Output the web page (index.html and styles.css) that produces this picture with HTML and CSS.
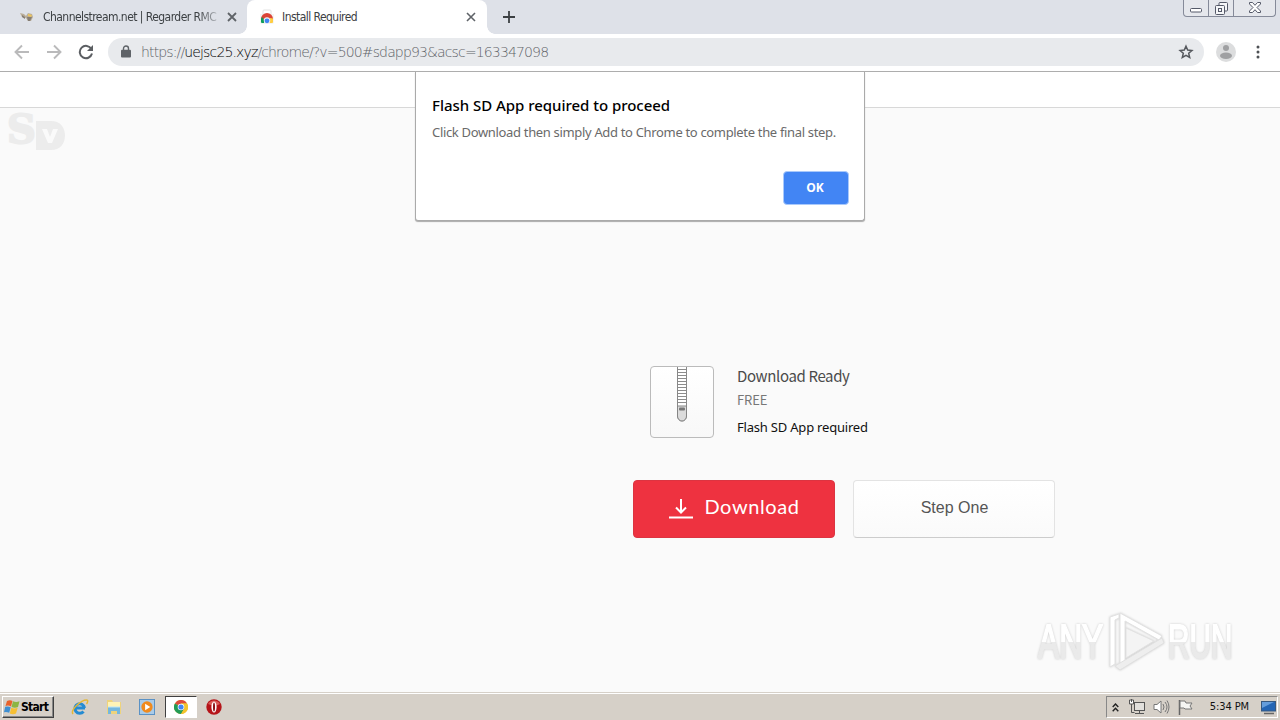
FILE: index.html
```html
<!DOCTYPE html>
<html lang="en">
<head>
    <meta charset="UTF-8">
    <meta name="viewport" content="width=device-width, initial-scale=1.0">
    <title>Install Required</title>
    <link rel="stylesheet" href="styles.css">
</head>
<body>
    <div class="screen">
        <div class="tabstrip">
            <div class="tab">
                <svg class="favicon" width="16" height="16" viewBox="0 0 16 16">
                    <path d="M1 4l4 1 2 2 2-3 4 1 1 3-2 4H9L7 9 3 8z" fill="#b9ad98"/>
                    <path d="M9 5l4 1-1 2-3-1z" fill="#ecc45c"/>
                    <path d="M8 8h5l-2 4H9zM3 6l3 2v2L3 8z" fill="#857d74"/>
                </svg>
                <span class="tab-title faded">Channelstream.net | Regarder RMC</span>
                <svg class="tab-close" width="10" height="10" viewBox="0 0 10 10"><path d="M1 1l8 8M9 1L1 9" stroke="#5f6368" stroke-width="1.8"/></svg>
            </div>
            <div class="tab active">
                <svg class="favicon" width="16" height="16" viewBox="0 0 16 16">
                    <path d="M4 5V2q0-1 1-1h6q1 0 1 1v3" fill="none" stroke="#e2e2e2"/>
                    <path d="M1 5h14v8q0 2-2 2H3q-2 0-2-2z" fill="#f4f4f4"/>
                    <path d="M2 10a6 6 0 0 1 12 0z" fill="#db4437"/>
                    <path d="M2 9.500V13q0 1 1 1h2l1-2-3-4z" fill="#0f9d58"/>
                    <path d="M14 9.500V13q0 1-1 1H9l2-5z" fill="#ffcd40"/>
                    <circle cx="8" cy="11.500" r="3.200" fill="#f1f1f1"/>
                    <circle cx="8" cy="11.800" r="2.400" fill="#4285f4"/>
                </svg>
                <span class="tab-title">Install Required</span>
                <svg class="tab-close" width="10" height="10" viewBox="0 0 10 10"><path d="M1 1l8 8M9 1L1 9" stroke="#5f6368" stroke-width="1.6"/></svg>
            </div>
            <svg class="new-tab" width="12" height="12" viewBox="0 0 12 12"><path d="M6 0v12M0 6h12" stroke="#3c4043" stroke-width="1.8"/></svg>
            <div class="window-buttons">
                <div class="wb"><svg width="12" height="5" viewBox="0 0 12 5"><rect x=".5" y=".5" width="11" height="3.5" rx="1" fill="#fff" stroke="#545968"/></svg></div>
                <div class="wb"><svg width="13" height="13" viewBox="0 0 13 13" fill="#f5f6f8" stroke="#545968"><rect x="4" y=".5" width="8.5" height="8.5" rx="1"/><rect x=".5" y="3.5" width="9" height="9" rx="1"/><rect x="3.5" y="6.5" width="3" height="3"/></svg></div>
                <div class="wb wide"><svg width="12" height="11" viewBox="0 0 12 11"><path d="M.5.5h3L6 3.300 8.500.5h3v1.500L8 5.500l3.500 3.500v1.500h-3L6 7.700 3.500 10.500h-3V9L4 5.500.5 2z" fill="#fff" stroke="#545968"/></svg></div>
            </div>
        </div>

        <div class="toolbar">
            <svg class="nav" width="16" height="16" viewBox="0 0 16 16"><path d="M15 8H2M8 1.500L1.500 8 8 14.500" fill="none" stroke="#bababb" stroke-width="1.900"/></svg>
            <svg class="nav" width="16" height="16" viewBox="0 0 16 16"><path d="M1 8h13M8 1.500L14.500 8 8 14.500" fill="none" stroke="#bababb" stroke-width="1.900"/></svg>
            <svg class="nav" width="16" height="16" viewBox="0 0 16 16"><path d="M13.400 5A6.200 6.200 0 1 0 14 9.600" fill="none" stroke="#5b5e62" stroke-width="2"/><path d="M15 1v6H9z" fill="#5b5e62"/></svg>
            <div class="omnibox">
                <svg width="10" height="13" viewBox="0 0 10 13"><path d="M2.500 6V3.500a2.500 2.500 0 0 1 5 0V6" fill="none" stroke="#5f6368" stroke-width="1.400"/><rect y="4.700" width="10" height="7.800" rx="1" fill="#5f6368"/></svg>
                <span class="url">https://<b>uejsc25.xyz</b>/chrome/?v=500#sdapp93&amp;acsc=163347098</span>
                <svg class="star" width="16" height="16" viewBox="0 0 16 16"><path d="M8 2.200l1.700 3.900 4.200.4-3.200 2.800 1 4.200L8 11.300l-3.700 2.200 1-4.200-3.200-2.800 4.200-.4z" fill="none" stroke="#55585d" stroke-width="1.500"/></svg>
            </div>
            <svg class="avatar" width="20" height="20" viewBox="0 0 20 20"><circle cx="10" cy="10" r="10" fill="#dcddde"/><circle cx="10" cy="6" r="3" fill="#9fa0a2"/><ellipse cx="10" cy="13.700" rx="6" ry="3.200" fill="#9fa0a2"/></svg>
            <svg class="menu" width="4" height="14" viewBox="0 0 4 14" fill="#4d5054"><circle cx="2" cy="2" r="1.500"/><circle cx="2" cy="7" r="1.500"/><circle cx="2" cy="12" r="1.500"/></svg>
        </div>

        <div class="page">
            <div class="page-header"></div>
            <div class="logo"><span class="logo-s">S</span><span class="logo-d"><svg width="29" height="29" viewBox="0 0 29 29"><path fill-rule="evenodd" d="M0 0h15c9 0 14 6 14 14.500S24 29 15 29H0zM6 8l6 14h4l6-14h-5l-3 8-3-8z" fill="#ececec"/></svg></span></div>

            <div class="offer">
                <div class="product">
                    <div class="zip-icon">
                        <svg width="12" height="56" viewBox="0 0 12 56">
                            <path d="M1.500 0v49a4.500 5 0 0 0 9 0V0" fill="#fff" stroke="#888"/>
                            <path d="M2 2.500h8M2 5.500h8M2 8.500h8M2 11.500h8M2 14.500h8M2 17.500h8M2 20.500h8M2 23.500h8M2 26.500h8M2 29.500h8M2 32.500h8M2 35.500h8" stroke="#8c8c8c"/>
                            <path d="M1.500 39v10a4.500 5 0 0 0 9 0V39z" fill="#dcdcdc" stroke="#858585"/>
                            <rect x="3" y="40.500" width="6" height="3" rx="1" fill="#777"/>
                        </svg>
                    </div>
                    <div class="product-info">
                        <h2>Download Ready</h2>
                        <p class="price">FREE</p>
                        <p class="note">Flash SD App required</p>
                    </div>
                </div>
                <div class="actions">
                    <div class="btn btn-download">
                        <svg width="24" height="21" viewBox="0 0 24 21" fill="none" stroke="#fff" stroke-width="2"><path d="M12 1v13M7 9.500l5 5 5-5M0 19.500h24"/></svg>
                        <span>Download</span>
                    </div>
                    <div class="btn btn-step"><span>Step One</span></div>
                </div>
            </div>

            <div class="dialog">
                <h1>Flash SD App required to proceed</h1>
                <p>Click Download then simply Add to Chrome to complete the final step.</p>
                <div class="dialog-ok">OK</div>
            </div>

            <div class="watermark">
                <span class="wm-any">ANY</span>
                <svg width="60" height="66" viewBox="0 0 60 66" fill="none">
                    <path d="M4 8v50l5-3V11l4-2V5zM14 4v52l5-3V12l34 19 3-4z" fill="#fff" stroke="#e2e2e2"/>
                    <path d="M20 19v30l28-17z" fill="#f4f4f4" stroke="#e2e2e2"/>
                    <path d="M9 57l5 4 44-27-2-5-42 25z" fill="#eee" stroke="#e0e0e0"/>
                </svg>
                <span class="wm-run">RUN</span>
            </div>
        </div>

        <div class="taskbar">
            <div class="start">
                <svg width="17" height="16" viewBox="0 0 17 16"><path d="M3 2q3-1.500 5.500 0L7 7.500Q4.500 6 1.500 7z" fill="#e8622c"/><path d="M9 2.300q3 1.500 6.500 0L14 8q-3 1.500-6.500 0z" fill="#8cb543"/><path d="M1.200 7.800q3-1 5.500.5l-1.500 5.500q-3-1.500-5.200-.5z" fill="#3f8fd2"/><path d="M7.300 8.800q3 1.500 6.400 0L12 14.500q-3 1.500-6.200 0z" fill="#f6bf33"/></svg>
                <span>Start</span>
            </div>
            <div class="launchers">
                <div class="task">
                    <svg width="18" height="18" viewBox="0 0 18 18"><path d="M14 10H5.500M13.500 10a4.800 4.800 0 1 0-1 3.500" fill="none" stroke="#258bd2" stroke-width="3"/><path d="M2 16C-1 12 10 2 15.500 2c2 0 1 3 0 4" fill="none" stroke="#e5b735" stroke-width="1.500"/></svg>
                </div>
                <div class="task">
                    <svg width="18" height="18" viewBox="0 0 18 18"><path d="M2 2h5l1 2h8v12H2z" fill="#eed37c"/><path d="M3 4h12v5H3z" fill="#fff3b5"/><path d="M3 9h12v7h-3v-3H6v3H3z" fill="#75b7de"/><path d="M3 9h12" stroke="#bde5f8"/></svg>
                </div>
                <div class="task">
                    <svg width="16" height="16" viewBox="0 0 17 17"><rect x=".5" y=".5" width="16" height="16" fill="#a9cbe8" stroke="#568fc4"/><circle cx="8.500" cy="8.500" r="6" fill="#f08a1d"/><path d="M6.500 5l5.500 3.500L6.500 12z" fill="#fff"/></svg>
                </div>
                <div class="task pressed">
                    <svg width="14" height="14" viewBox="0 0 14 14"><circle cx="7" cy="7" r="7" fill="#f2c32d"/><path d="M7 7L.9 3.500A7 7 0 0 1 13.100 3.500H7z" fill="#df4a3b"/><path d="M7 7L.9 3.500A7 7 0 0 0 7 14l3-5z" fill="#239b57"/><path d="M7 3.500h6.100A7 7 0 0 1 7 14l3-5z" fill="#f2c32d"/><circle cx="7" cy="7" r="3.300" fill="#fff"/><circle cx="7" cy="7" r="2.600" fill="#4285f4"/></svg>
                </div>
                <div class="task">
                    <svg width="16" height="16" viewBox="0 0 16 16"><circle cx="8" cy="8" r="7.700" fill="#b51419"/><path d="M2 5a7 7 0 0 1 12 0q-5 3-12 0z" fill="#da5c58"/><ellipse cx="8" cy="8" rx="2.600" ry="5.500" fill="#fff"/><ellipse cx="8" cy="8" rx="1" ry="4.500" fill="#8b1015"/></svg>
                </div>
            </div>
            <div class="tray">
                <svg width="7" height="9" viewBox="0 0 7 9" fill="none" stroke="#222" stroke-width="1.400"><path d="M.7 4L3.500 1l2.800 3M.7 8.300l2.800-3 2.800 3"/></svg>
                <svg class="network" width="17" height="16" viewBox="0 0 17 16"><rect x="5.500" y="3.500" width="10" height="8" fill="#e2e0dc" stroke="#555"/><path d="M6 14.500h9M10.500 12v2" stroke="#555"/><path d="M.5 1v4h4V1z" fill="#fff" stroke="#555"/><path d="M2.500 0v3M2.500 5v8.500h3" fill="none" stroke="#555"/></svg>
                <svg class="sound" width="17" height="16" viewBox="0 0 17 16" fill="#fff" stroke="#777"><path d="M1 5.500h3L8 2v12l-4-3.500H1z"/><path d="M10 5q2 3 0 6M12 3q4 5 0 10M14 1.500q4 6.500 0 13" fill="none"/></svg>
                <svg class="flag" width="17" height="16" viewBox="0 0 17 16"><path d="M2.500 1v15" stroke="#666" stroke-width="1.500"/><path d="M3 2h5l1 2h6l-2 3 2 3H8L7 9H3z" fill="#f5f5f3" stroke="#777"/></svg>
                <span class="clock">5:34 PM</span>
                <svg class="desktop" width="15" height="15" viewBox="0 0 15 15"><rect x=".5" y="1.500" width="14" height="9.500" fill="#2465b4" stroke="#37587f"/><path d="M1 2h12L1 8z" fill="#659ddb"/><path d="M3 13.500h10" stroke="#666" stroke-width="1.500"/></svg>
            </div>
        </div>
    </div>
</body>
</html>
```
FILE: styles.css
```css
:root {
    --strip: #dee1e8;
    --pill: #e8eaed;
    --page-bg: #fafafa;
    --line: #adadad;
    --taskbar: #d6d0c8;
    --accent: #ee3240;
}

* {
    margin: 0;
    padding: 0;
    box-sizing: border-box;
}

body {
    font-family: "Open Sans", sans-serif;
    background: var(--page-bg);
    overflow: hidden;
}

svg {
    display: block;
    flex: none;
}

.screen {
    width: 1280px;
    height: 720px;
    display: flex;
    flex-direction: column;
}

/* tabs */
.tabstrip {
    height: 34px;
    flex: none;
    display: flex;
    background: var(--strip);
}

.tab {
    display: flex;
    align-items: center;
    height: 34px;
    width: 247px;
    padding: 0 10px 0 19px;
}

.tab.active {
    width: 240px;
    padding: 0 11px 0 12px;
    background: #fff;
    border-radius: 8px 8px 0 0;
    position: relative;
}

.tab.active::before,
.tab.active::after {
    content: '';
    position: absolute;
    bottom: 0;
    width: 8px;
    height: 8px;
}

.tab.active::before {
    left: -8px;
    background: radial-gradient(circle at 0 0, transparent 7.5px, #fff 8px);
}

.tab.active::after {
    right: -8px;
    background: radial-gradient(circle at 100% 0, transparent 7.5px, #fff 8px);
}

.tab-title {
    flex: 1;
    margin-left: 7px;
    font: 12px/16px "DejaVu Sans Condensed", "DejaVu Sans", sans-serif;
    letter-spacing: -0.55px;
    color: #3c4043;
    white-space: nowrap;
    overflow: hidden;
}

.faded {
    flex: none;
    width: 174px;
    margin-left: 8px;
    -webkit-mask-image: linear-gradient(to right, #000 155px, transparent 180px);
}

.tab:not(.active) .tab-close {
    margin-left: 10px;
}

.new-tab {
    margin: 11px 0 0 16px;
}

.window-buttons {
    display: flex;
    height: 17px;
    margin: 0 4px 0 auto;
    border: 1px solid #858a99;
    border-top: 0;
    border-radius: 0 0 4px 4px;
    background: #e5e7ec;
}

.wb {
    width: 25px;
    display: flex;
    justify-content: center;
    align-items: flex-end;
    padding-bottom: 3px;
    border-right: 1px solid #858a99;
}

.wb:nth-child(2) {
    padding-bottom: 1px;
}

.wb.wide {
    width: 41px;
    border-right: 0;
}

/* toolbar */
.toolbar {
    height: 38px;
    flex: none;
    display: flex;
    align-items: center;
    padding: 0 20px 2px 14px;
    background: #fff;
    border-bottom: 1px solid var(--line);
}

.nav {
    margin-right: 16px;
}

.nav:nth-child(3) {
    margin-right: 14px;
}

.omnibox {
    width: 1096px;
    height: 28px;
    display: flex;
    align-items: center;
    padding: 0 10px 0 13px;
    border-radius: 14px;
    background: var(--pill);
}

.url {
    margin-left: 10px;
    font: 200 14px/20px "DejaVu Sans", sans-serif;
    letter-spacing: -0.86px;
    color: #5f6368;
    white-space: nowrap;
}

.url b {
    font-weight: 200;
    color: #000;
}

.star {
    margin-left: auto;
}

.avatar {
    margin-left: 12px;
}

.menu {
    margin-left: auto;
}

/* page */
.page {
    flex: 1;
    position: relative;
    background: var(--page-bg);
}

.page-header {
    height: 36px;
    background: #fff;
    border-bottom: 1px solid #d8d8d8;
}

.logo {
    height: 42px;
    display: flex;
    padding-left: 7px;
    color: #ececec;
}

.logo-s {
    width: 29px;
    font: 700 40px/42px "DejaVu Serif", serif;
    -webkit-text-stroke: 2px #ececec;
}

.logo-d {
    align-self: flex-end;
}

.offer {
    width: 422px;
    margin: 216px 0 0 633px;
}

.product {
    display: flex;
    padding-left: 17px;
}

.zip-icon {
    width: 64px;
    height: 72px;
    display: flex;
    justify-content: center;
    border: 1px solid #bbb;
    border-radius: 4px;
    background: linear-gradient(#fff, #f8f8f8);
}

.product-info {
    margin-left: 23px;
    font-family: "Noto Sans CJK SC", sans-serif;
    white-space: nowrap;
}

.product-info h2 {
    font-size: 15px;
    font-weight: 400;
    line-height: 19px;
    letter-spacing: -0.37px;
    color: #4b4b4b;
}

.price {
    margin-top: 5px;
    font-size: 13px;
    line-height: 20px;
    letter-spacing: -0.1px;
    color: #777;
}

.note {
    margin-top: 7px;
    font: 13px/20px "Noto Sans", sans-serif;
    letter-spacing: -0.2px;
    color: #111;
}

.actions {
    display: flex;
    gap: 18px;
    margin-top: 42px;
}

.btn {
    width: 202px;
    height: 58px;
    display: flex;
    align-items: center;
    justify-content: center;
    border-radius: 4px;
}

.btn-download {
    gap: 11px;
    padding: 0 0 6px 1px;
    background: var(--accent);
    border: 1px solid #dc3441;
    color: #fff;
    font: 20px/28px "Lato", sans-serif;
    letter-spacing: 0.6px;
}

.btn-download svg {
    margin-top: 5px;
}

.btn-step {
    padding: 0 0 3px 1px;
    background: linear-gradient(#fff, #fafafa);
    border: 1px solid #e3e3e3;
    border-bottom-color: #ccc;
    color: #555;
    font: 16px/22px "Liberation Sans", sans-serif;
}

.dialog {
    position: absolute;
    top: 0;
    left: 415px;
    width: 450px;
    height: 149px;
    padding: 22px 16px 0;
    background: #fff;
    border: 1px solid #aaa;
    border-top: 0;
    border-radius: 0 0 3px 3px;
    box-shadow: 0 1px 1px #aaa;
    white-space: nowrap;
}

.dialog h1 {
    font: 500 15px/22px "Noto Sans", sans-serif;
    letter-spacing: -0.03px;
    color: #000;
}

.dialog p {
    margin-top: 7px;
    font: 13px/18px "Noto Sans", sans-serif;
    letter-spacing: -0.33px;
    color: #6a6a6a;
}

.dialog-ok {
    width: 66px;
    height: 34px;
    margin: 30px -1px 0 auto;
    padding-right: 2px;
    border: 1px solid #a9c9fb;
    border-radius: 4px;
    background: #4285f4;
    color: #fff;
    text-align: center;
    font: 700 12px/32px "Open Sans", sans-serif;
}

.watermark {
    position: absolute;
    left: 1038px;
    top: 536px;
    display: flex;
    align-items: center;
    height: 68px;
    color: #fff;
    filter: drop-shadow(0 0 1px #ccc);
}

.watermark span {
    font: 48px/60px "Liberation Sans", sans-serif;
    background: linear-gradient(#fff 50%, #eaeaea 50%);
    -webkit-background-clip: text;
    -webkit-text-fill-color: transparent;
    -webkit-text-stroke: 2px transparent;
    transform-origin: left;
}

.wm-any {
    margin-right: -33px;
    transform: scaleX(0.66);
}

.watermark svg {
    margin-left: 2px;
}

.watermark .wm-run {
    margin-left: 2px;
    transform: scaleX(0.62);
}

/* taskbar */
.taskbar {
    height: 28px;
    flex: none;
    display: flex;
    align-items: center;
    padding: 2px 2px 1px;
    background: var(--taskbar);
    border-top: 1px solid #d6d0c8;
    box-shadow: inset 0 1px #fff;
}

.start {
    width: 52px;
    height: 22px;
    display: flex;
    align-items: center;
    padding-left: 1px;
    border: 1px solid;
    border-color: #fff #404040 #404040 #fff;
    box-shadow: inset -1px -1px #888;
    font: 700 12px/16px "DejaVu Sans Condensed", sans-serif;
    letter-spacing: -0.7px;
    color: #000;
}

.launchers {
    display: flex;
    margin-left: 10px;
}

.task {
    width: 32px;
    height: 22px;
    margin-right: 1.5px;
    display: flex;
    align-items: center;
    justify-content: center;
}

.pressed {
    background: #fff;
    border: 1px solid;
    border-color: #404040 #fff #fff #404040;
}

.tray {
    width: 172px;
    height: 22px;
    margin-left: auto;
    display: flex;
    align-items: center;
    padding: 0 1px 0 5px;
    border: 1px solid;
    border-color: #888 #fff #fff #888;
}

.network {
    margin-left: 10px;
}

.sound,
.flag {
    margin-left: 7px;
}

.clock {
    margin-left: auto;
    font: 11px/16px "DejaVu Sans Condensed", sans-serif;
    letter-spacing: -0.1px;
    color: #111;
}

.desktop {
    margin-left: 12px;
}
```
